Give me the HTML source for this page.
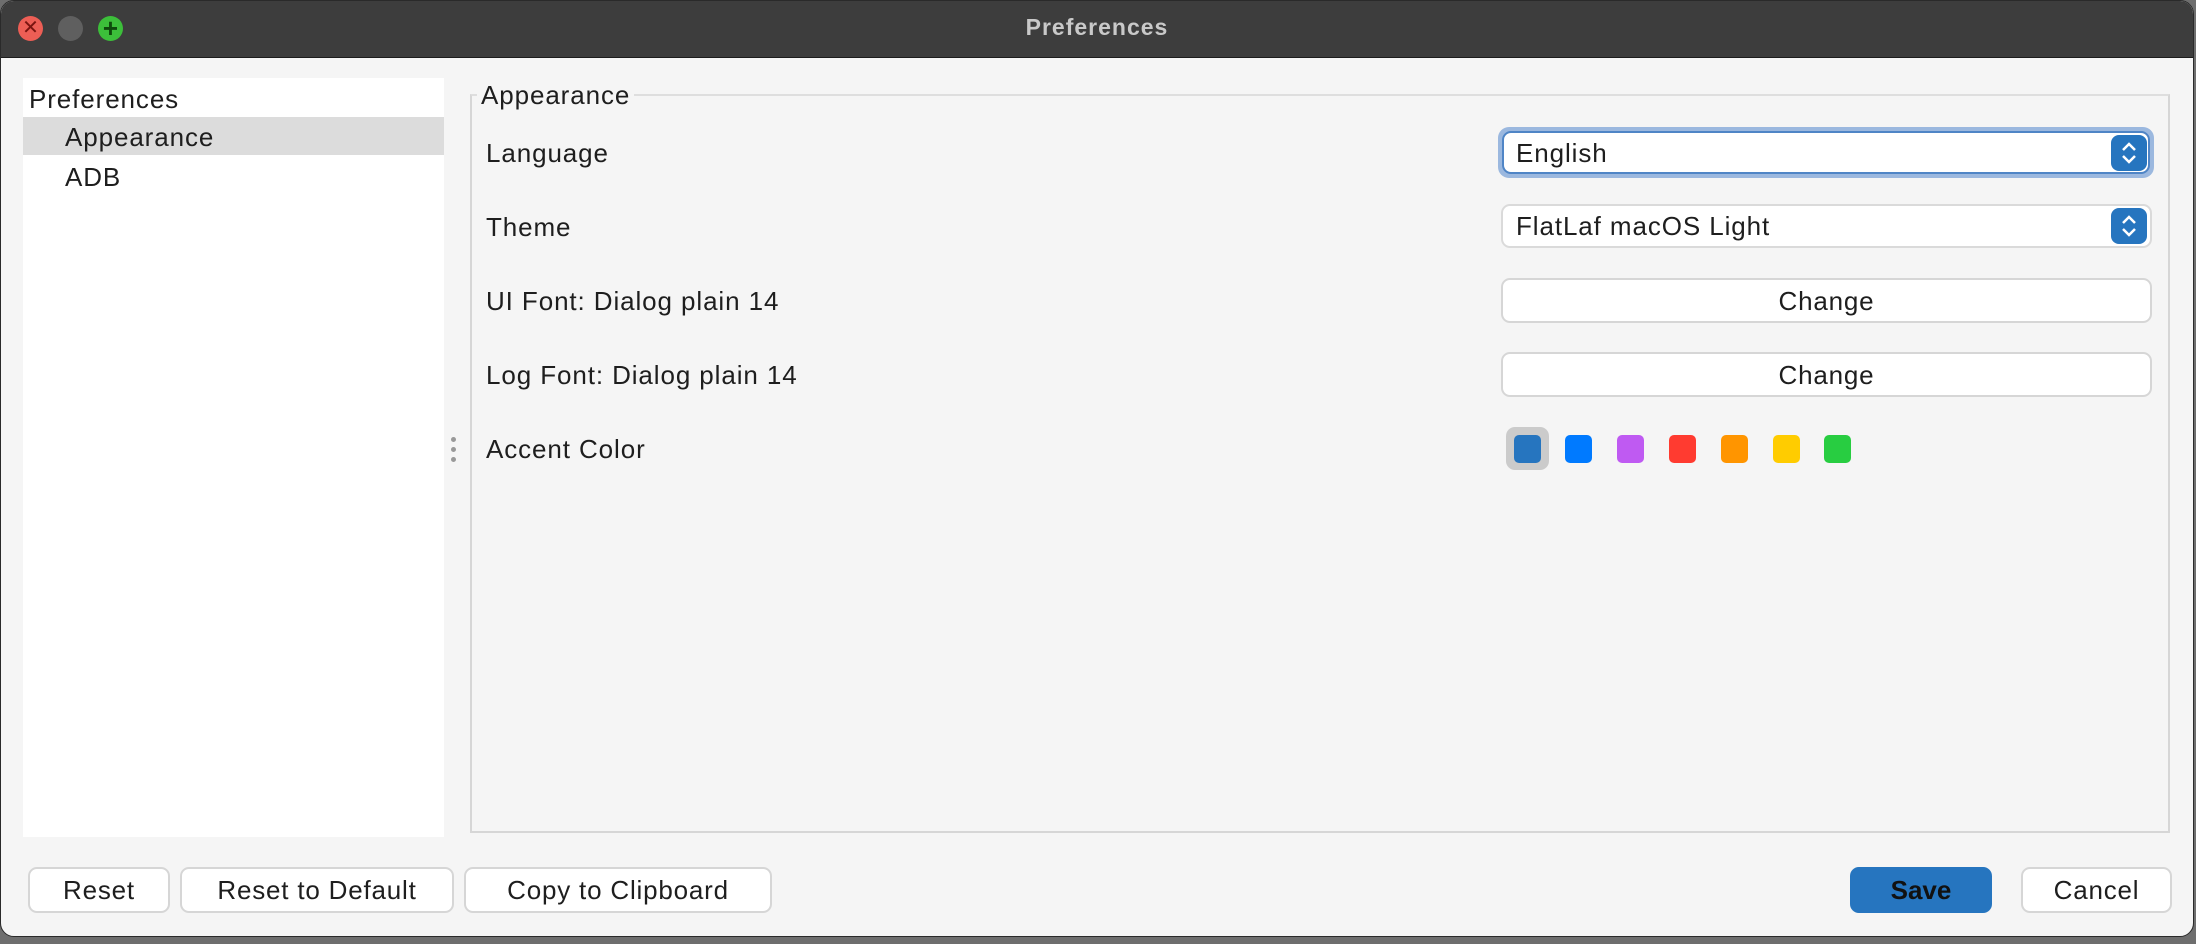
<!DOCTYPE html>
<html><head><meta charset="utf-8"><style>
*{box-sizing:border-box;margin:0;padding:0}
body{width:2196px;height:944px;background:#6e6e6e;position:relative;overflow:hidden;font-family:"Liberation Sans",sans-serif;color:#1e1e1e}
.abs{position:absolute}
.win{left:0;top:0;width:2194px;height:937px;background:#f5f5f5;border-radius:14px;overflow:hidden;border:1px solid #2a2a2a}
.title{left:0;top:0;width:100%;height:57px;background:#3d3d3d;border-bottom:1px solid #1c1c1c}
.t{font-size:26px;letter-spacing:0.9px;white-space:nowrap;line-height:30px}
.dot{width:25px;height:25px;border-radius:50%;top:15px}
.box{background:#fff;border:2px solid #dadada;border-radius:9px}
.btn{background:#fff;border:2px solid #d6d6d6;border-radius:9px;text-align:center;font-size:26px;letter-spacing:0.8px;line-height:42px}
.sw{width:27px;height:28px;border-radius:5px;top:434px}
.spin{width:36px;height:36px;background:#2675bf;border-radius:8px}
</style></head><body>
<div class="abs win">
 <div class="abs title"></div>
 <div class="abs dot" style="left:17px;background:#ed5e55"></div>
 <div class="abs" style="left:17px;top:14px;width:25px;height:25px;color:#7a1410;font-size:20px;line-height:26px;text-align:center">✕</div>
 <div class="abs dot" style="left:57px;background:#5f5f5f"></div>
 <div class="abs dot" style="left:97px;background:#3cbf3a"></div>
 <div class="abs" style="left:97px;top:14px;width:25px;height:25px;color:#0e4a0c;font-size:26px;font-weight:bold;line-height:26px;text-align:center">+</div>
 <div class="abs" style="left:0;width:100%;top:13px;text-align:center;color:#c9c9c9;font-size:23px;font-weight:bold;letter-spacing:1px">Preferences</div>

 <div class="abs" style="left:22px;top:77px;width:421px;height:759px;background:#fff"></div>
 <div class="abs" style="left:22px;top:116px;width:421px;height:38px;background:#dcdcdc"></div>
 <div class="abs t" style="left:28px;top:83px">Preferences</div>
 <div class="abs t" style="left:64px;top:121px">Appearance</div>
 <div class="abs t" style="left:64px;top:161px">ADB</div>

 <div class="abs" style="left:450px;top:436px;width:5px;height:5px;border-radius:50%;background:#999"></div>
 <div class="abs" style="left:450px;top:446px;width:5px;height:5px;border-radius:50%;background:#999"></div>
 <div class="abs" style="left:450px;top:456px;width:5px;height:5px;border-radius:50%;background:#999"></div>

 <div class="abs" style="left:469px;top:93px;width:1700px;height:739px;border:2px solid #d6d6d6;border-top-color:#dedede"></div>
 <div class="abs t" style="left:476px;top:79px;background:#f5f5f5;padding:0 4px">Appearance</div>

 <div class="abs t" style="left:485px;top:137px">Language</div>
 <div class="abs t" style="left:485px;top:211px">Theme</div>
 <div class="abs t" style="left:485px;top:285px">UI Font: Dialog plain 14</div>
 <div class="abs t" style="left:485px;top:359px">Log Font: Dialog plain 14</div>
 <div class="abs t" style="left:485px;top:433px">Accent Color</div>

 <div class="abs" style="left:1497px;top:126px;width:656px;height:51px;border-radius:11px;background:#9bb8df"></div>
 <div class="abs box" style="left:1501px;top:130px;width:648px;height:43px;border-color:#4f85c6"></div>
 <div class="abs t" style="left:1515px;top:137px">English</div>
 <div class="abs spin" style="left:2110px;top:134px"></div>
 <svg class="abs" style="left:2110px;top:134px" width="36" height="36"><path d="M12 15l6-6 6 6M12 21l6 6 6-6" stroke="#fff" stroke-width="2.5" fill="none"/></svg>

 <div class="abs box" style="left:1500px;top:203px;width:651px;height:44px"></div>
 <div class="abs t" style="left:1515px;top:210px">FlatLaf macOS Light</div>
 <div class="abs spin" style="left:2110px;top:207px"></div>
 <svg class="abs" style="left:2110px;top:207px" width="36" height="36"><path d="M12 15l6-6 6 6M12 21l6 6 6-6" stroke="#fff" stroke-width="2.5" fill="none"/></svg>

 <div class="abs btn" style="left:1500px;top:277px;width:651px;height:45px">Change</div>
 <div class="abs btn" style="left:1500px;top:351px;width:651px;height:45px">Change</div>

 <div class="abs" style="left:1505px;top:426px;width:43px;height:43px;border-radius:9px;background:#cbcbcb"></div>
 <div class="abs sw" style="left:1513px;background:#2675bf"></div>
 <div class="abs sw" style="left:1564px;background:#007aff"></div>
 <div class="abs sw" style="left:1616px;background:#bf5af2"></div>
 <div class="abs sw" style="left:1668px;background:#ff3b30"></div>
 <div class="abs sw" style="left:1720px;background:#ff9500"></div>
 <div class="abs sw" style="left:1772px;background:#ffcc00"></div>
 <div class="abs sw" style="left:1823px;background:#28cd41"></div>

 <div class="abs btn" style="left:27px;top:866px;width:142px;height:46px">Reset</div>
 <div class="abs btn" style="left:179px;top:866px;width:274px;height:46px">Reset to Default</div>
 <div class="abs btn" style="left:463px;top:866px;width:308px;height:46px">Copy to Clipboard</div>
 <div class="abs btn" style="left:1849px;top:866px;width:142px;height:46px;background:#2675bf;border-color:#2675bf;font-weight:bold;color:#111;letter-spacing:0">Save</div>
 <div class="abs btn" style="left:2020px;top:866px;width:151px;height:46px">Cancel</div>
</div>
</body></html>
